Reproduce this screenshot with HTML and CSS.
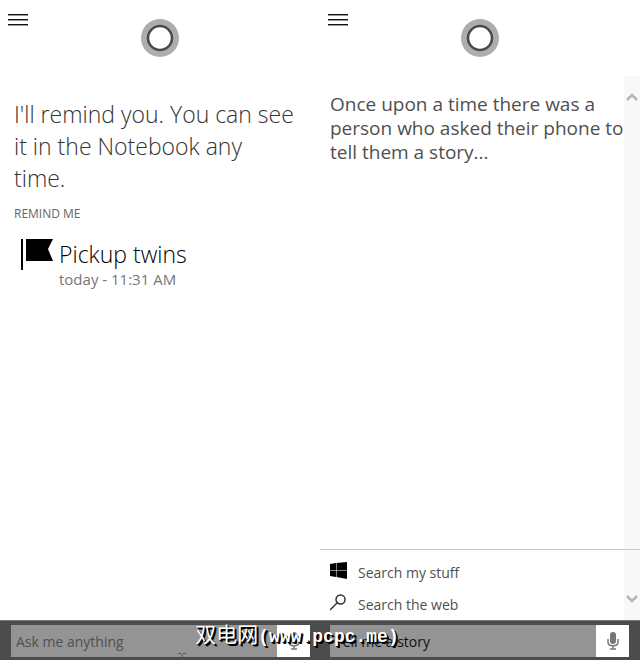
FILE: index.html
```
<!DOCTYPE html>
<html lang="en">
<head>
    <meta charset="UTF-8">
    <meta name="viewport" content="width=device-width, initial-scale=1.0">
    <title>Cortana</title>
    <link rel="stylesheet" href="styles.css">
</head>
<body>

<div class="panels">
    <!-- Reminder panel -->
    <section class="panel">
        <header class="panel-header">
            <button class="menu-button" type="button" aria-label="Menu"><span></span><span></span><span></span></button>
            <svg class="cortana-ring" viewBox="0 0 38 38" aria-hidden="true">
                <circle cx="19" cy="19" r="19" fill="#adadad"/>
                <circle cx="19" cy="19" r="12" fill="#fff" stroke="#4a4a4a" stroke-width="2.500"/>
            </svg>
        </header>

        <main class="reminder">
            <h1>I'll remind you. You can see it in the Notebook any time.</h1>
            <h2>REMIND ME</h2>
            <div class="reminder-item">
                <svg class="flag" viewBox="0 0 34 32" aria-hidden="true">
                    <path d="M1 0h2v31H1zM6 0h27l-5 10 5 12H6z"/>
                </svg>
                <div>
                    <h3>Pickup twins</h3>
                    <p>today - 11:31 AM</p>
                </div>
            </div>
        </main>

        <form class="search-bar">
            <input type="text" placeholder="Ask me anything" aria-label="Ask me anything">
            <button type="button" aria-label="Speak">
                <svg viewBox="0 0 12 18" aria-hidden="true">
                    <rect x="3" y="0" width="6" height="12" rx="3" fill="#777"/>
                    <path d="M1 7v3c0 5 10 5 10 0V7M6 14v3M3 17h6" fill="none" stroke="#777" stroke-width="1.5"/>
                </svg>
            </button>
        </form>
        <svg class="text-cursor" viewBox="0 0 8 8" aria-hidden="true">
            <path d="M0 1.5h3M5 1.5h3M4 2v6" fill="none" stroke="#555"/>
        </svg>
    </section>

    <!-- Story panel -->
    <section class="panel">
        <header class="panel-header">
            <button class="menu-button" type="button" aria-label="Menu"><span></span><span></span><span></span></button>
            <svg class="cortana-ring" viewBox="0 0 38 38" aria-hidden="true">
                <circle cx="19" cy="19" r="19" fill="#adadad"/>
                <circle cx="19" cy="19" r="12" fill="#fff" stroke="#4a4a4a" stroke-width="2.500"/>
            </svg>
        </header>

        <main class="story">
            <p class="story-text">Once upon a time there was a person who asked their phone to tell them a story...</p>
            <div class="scrollbar">
                <button type="button" aria-label="Scroll up">
                    <svg viewBox="0 0 12 10" aria-hidden="true"><path d="M1 8l5-5 5 5" fill="none" stroke="#b4b4b4" stroke-width="2.500"/></svg>
                </button>
                <button type="button" aria-label="Scroll down">
                    <svg viewBox="0 0 12 10" aria-hidden="true"><path d="M1 2l5 5 5-5" fill="none" stroke="#b4b4b4" stroke-width="2.500"/></svg>
                </button>
            </div>
            <nav class="suggestions">
                <a href="#">
                    <svg viewBox="0 0 17 17" aria-hidden="true"><path d="M0 2l6-1v7H0zM6.500 1L17 0v8H6.500zM0 8.500h6v6.500l-6-1zM6.500 8.500H17V17L6.500 15z"/></svg>
                    Search my stuff
                </a>
                <a href="#">
                    <svg viewBox="0 0 17 17" aria-hidden="true"><path d="M8 8L0 16" fill="none" stroke="#333" stroke-width="1.5"/><circle cx="10.5" cy="5.500" r="4.500" fill="none" stroke="#333" stroke-width="1.5"/></svg>
                    Search the web
                </a>
            </nav>
        </main>

        <form class="search-bar typed">
            <input type="text" value="Tell me a story" aria-label="Ask me anything">
            <button type="button" aria-label="Speak">
                <svg viewBox="0 0 12 18" aria-hidden="true">
                    <rect x="3" y="0" width="6" height="12" rx="3" fill="#777"/>
                    <path d="M1 7v3c0 5 10 5 10 0V7M6 14v3M3 17h6" fill="none" stroke="#777" stroke-width="1.5"/>
                </svg>
            </button>
        </form>
    </section>

    <div class="watermark"><span>双电网</span>(www.pcpc.me)</div>
</div>

</body>
</html>
```
FILE: styles.css
```
* {
    box-sizing: border-box;
}
body {
    font-family: "Open Sans", "Noto Sans", sans-serif;
    color: #505050;
    margin: 0;
    background-color: #fff;
}
h1, h2, h3, p {
    margin: 0;
    font-weight: normal;
}
button {
    border: none;
    padding: 0;
    background: none;
    cursor: pointer;
}
svg {
    display: block;
}
.panels {
    position: relative;
    display: grid;
    grid-template-columns: 1fr 1fr;
    min-height: 100vh;
}
.panel {
    position: relative;
    display: flex;
    flex-direction: column;
    min-width: 0;
}

/* Header */
.panel-header {
    display: grid;
    grid-template-columns: 1fr 38px 1fr;
    align-items: start;
    height: 76px;
    padding: 14px 8px 0;
}
.menu-button {
    display: flex;
    flex-direction: column;
    gap: 4px;
    width: 20px;
}
.menu-button span {
    height: 1px;
    width: 20px;
    background-color: #111;
    box-shadow: 0 1px 0 #999;
}
.cortana-ring {
    width: 38px;
    height: 38px;
    margin-top: 5px;
}

/* Reminder */
.reminder {
    flex: 1;
    padding: 22px 24px 0 14px;
}
.reminder h1 {
    font-size: 23px;
    font-weight: 300;
    line-height: 32px;
    color: #333;
}
.reminder h2 {
    font-size: 12px;
    line-height: 16px;
    margin-top: 12px;
    color: #666;
}
.reminder-item {
    display: flex;
    gap: 5px;
    margin-top: 17px;
    padding-left: 6px;
}
.flag {
    width: 34px;
    height: 32px;
}
.reminder-item h3 {
    font-size: 23px;
    font-weight: 300;
    line-height: 30px;
    color: #000;
}
.reminder-item p {
    font-size: 15px;
    line-height: 20px;
    color: #777;
}

/* Story */
.story {
    flex: 1;
    display: grid;
    grid-template-columns: 1fr 16px;
    grid-template-rows: 1fr auto;
}
.story-text {
    padding: 16px 0 0 10px;
    font-size: 19px;
    line-height: 24px;
    grid-area: 1 / 1;
}
.scrollbar {
    grid-area: 1 / 2 / 3 / 3;
    display: flex;
    flex-direction: column;
    justify-content: space-between;
    align-items: center;
    padding: 16px 0;
    background-color: #f8f8f8;
}
.scrollbar svg {
    width: 12px;
    height: 10px;
}
.suggestions {
    grid-area: 2 / 1 / 3 / 3;
    border-top: 1px solid #c8c8c8;
    padding: 6px 10px 0;
}
.suggestions a {
    display: flex;
    align-items: center;
    gap: 11px;
    height: 32px;
    font-size: 14px;
    color: #505050;
    text-decoration: none;
}
.suggestions svg {
    width: 17px;
    height: 17px;
    margin-bottom: 4px;
}

/* Search bar */
.search-bar {
    display: flex;
    height: 40px;
    padding: 4px 10px 3px 11px;
    background-color: #4c4c4c;
    border-top: 1px solid #777;
}
.search-bar.typed {
    padding: 4px 11px 3px 10px;
}
.search-bar input {
    flex: 1;
    min-width: 0;
    border: none;
    padding: 0 5px;
    background-color: #949494;
    color: #111;
    font-family: inherit;
    font-size: 14px;
}
.search-bar input::placeholder {
    color: #505050;
}
.search-bar button {
    display: flex;
    align-items: center;
    justify-content: center;
    width: 33px;
    background-color: #fff;
}
.search-bar svg {
    width: 12px;
    height: 18px;
}
.text-cursor {
    position: absolute;
    left: 178px;
    bottom: 0;
    width: 8px;
    height: 8px;
}

/* Watermark over both panels */
.watermark {
    position: absolute;
    bottom: 11px;
    left: 0;
    right: 0;
    padding-right: 46px;
    text-align: center;
    font-family: "Liberation Mono", "Noto Sans CJK SC", monospace;
    font-size: 18px;
    font-weight: bold;
    line-height: 24px;
    color: #fff;
    text-shadow: 1px 1px 0 #000, 2px 2px 0 #000;
    pointer-events: none;
}
.watermark span {
    font-size: 21px;
    font-weight: normal;
}
```
